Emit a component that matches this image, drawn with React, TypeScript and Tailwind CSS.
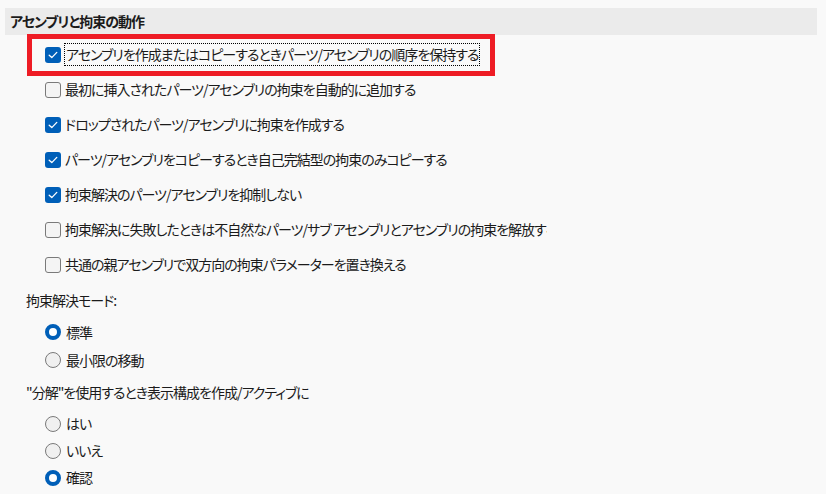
import React from "react";

const font = { fontFamily: '"Noto Sans CJK JP", "Noto Sans", sans-serif' };

function Check({ checked }: { checked: boolean }) {
  if (checked) {
    return (
      <span className="flex h-[16px] w-[16px] shrink-0 items-center justify-center rounded-[3px] bg-[#005fb8]">
        <svg width="10" height="8" viewBox="0 0 10 8" fill="none">
          <path d="M1.2 4.2 L3.8 6.6 L8.8 1.4" stroke="white" strokeWidth="1.3" strokeLinecap="round" strokeLinejoin="round" />
        </svg>
      </span>
    );
  }
  return <span className="h-[16px] w-[16px] shrink-0 rounded-[3px] border border-[#7a7a7a] bg-[#f4f4f4]" />;
}

function Radio({ checked }: { checked: boolean }) {
  if (checked) {
    return <span className="h-[16px] w-[16px] shrink-0 rounded-full border-[4.5px] border-[#005fb8] bg-white" />;
  }
  return <span className="h-[16px] w-[16px] shrink-0 rounded-full border border-[#7a7a7a] bg-[#f0f0f0]" />;
}

const checks: [boolean, string][] = [
  [true, "アセンブリを作成またはコピーするときパーツ/アセンブリの順序を保持する"],
  [false, "最初に挿入されたパーツ/アセンブリの拘束を自動的に追加する"],
  [true, "ドロップされたパーツ/アセンブリに拘束を作成する"],
  [true, "パーツ/アセンブリをコピーするとき自己完結型の拘束のみコピーする"],
  [true, "拘束解決のパーツ/アセンブリを抑制しない"],
  [false, "拘束解決に失敗したときは不自然なパーツ/サブ アセンブリとアセンブリの拘束を解放する"],
  [false, "共通の親アセンブリで双方向の拘束パラメーターを置き換える"],
];

export default function App() {
  return (
    <div
      className="h-[494px] w-[826px] overflow-hidden bg-[#f9f9f9] text-[14px] tracking-[-1px] text-[#1b1b1b] [font-feature-settings:'palt']"
      style={font}
    >
      <div className="h-[8px]" />
      <div className="ml-[5px] flex h-[27px] w-[812px] items-center bg-[#ebebeb] pl-[5px] font-semibold">
        アセンブリと拘束の動作
      </div>
      <div className="h-[2px]" />
      <div className="flex flex-col">
        {checks.map(([c, t], i) => (
          <div key={i} className="relative flex h-[35px] items-center pl-[45px]">
            <Check checked={c} />
            {i === 0 ? (
              <span className="ml-[3px] border border-dotted border-black px-[1px] leading-[21px] whitespace-nowrap">
                {t}
              </span>
            ) : (
              <span className="ml-[4px] w-[482px] overflow-hidden whitespace-nowrap leading-[21px]">{t}</span>
            )}
            {i === 0 && (
              <div className="pointer-events-none absolute left-[27px] top-[-3px] h-[42px] w-[468px] border-[5px] border-[#ee1c25]" />
            )}
          </div>
        ))}
      </div>
      <div className="flex h-[36px] items-center pl-[26px]">拘束解決モード:</div>
      {[
        [true, "標準"],
        [false, "最小限の移動"],
      ].map(([c, t], i) => (
        <div key={i} className="flex h-[28px] items-center gap-[5px] pl-[45px]">
          <Radio checked={c as boolean} />
          <span>{t as string}</span>
        </div>
      ))}
      <div className="flex h-[36px] items-center pl-[26px]">"分解"を使用するとき表示構成を作成/アクティブに</div>
      {[
        [false, "はい"],
        [false, "いいえ"],
        [true, "確認"],
      ].map(([c, t], i) => (
        <div key={i} className="flex h-[27px] items-center gap-[5px] pl-[45px]">
          <Radio checked={c as boolean} />
          <span>{t as string}</span>
        </div>
      ))}
    </div>
  );
}
